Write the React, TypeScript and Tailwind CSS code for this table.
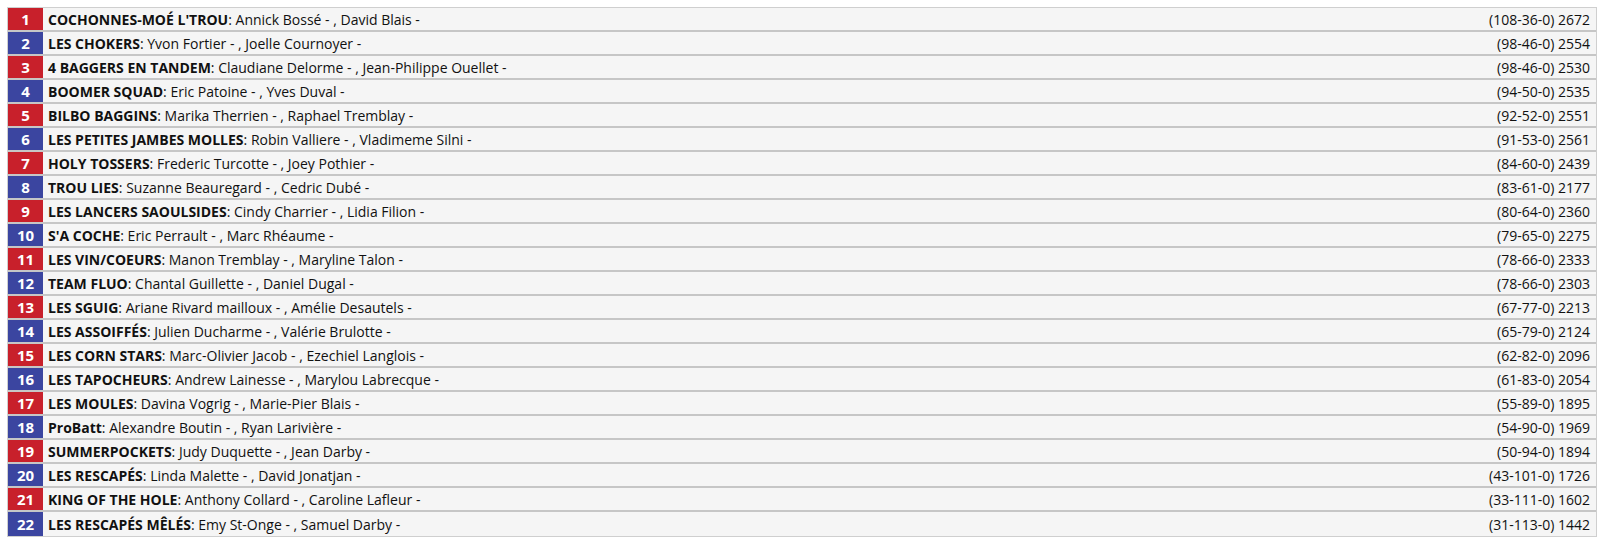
import React from 'react';

type Team = {
  name: string;
  players: string;
  record: string;
  points: number;
};

const teams: Team[] = [
  { name: "COCHONNES-MOÉ L'TROU", players: 'Annick Bossé - , David Blais -', record: '(108-36-0)', points: 2672 },
  { name: 'LES CHOKERS', players: 'Yvon Fortier - , Joelle Cournoyer -', record: '(98-46-0)', points: 2554 },
  { name: '4 BAGGERS EN TANDEM', players: 'Claudiane Delorme - , Jean-Philippe Ouellet -', record: '(98-46-0)', points: 2530 },
  { name: 'BOOMER SQUAD', players: 'Eric Patoine - , Yves Duval -', record: '(94-50-0)', points: 2535 },
  { name: 'BILBO BAGGINS', players: 'Marika Therrien - , Raphael Tremblay -', record: '(92-52-0)', points: 2551 },
  { name: 'LES PETITES JAMBES MOLLES', players: 'Robin Valliere - , Vladimeme Silni -', record: '(91-53-0)', points: 2561 },
  { name: 'HOLY TOSSERS', players: 'Frederic Turcotte - , Joey Pothier -', record: '(84-60-0)', points: 2439 },
  { name: 'TROU LIES', players: 'Suzanne Beauregard - , Cedric Dubé -', record: '(83-61-0)', points: 2177 },
  { name: 'LES LANCERS SAOULSIDES', players: 'Cindy Charrier - , Lidia Filion -', record: '(80-64-0)', points: 2360 },
  { name: "S'A COCHE", players: 'Eric Perrault - , Marc Rhéaume -', record: '(79-65-0)', points: 2275 },
  { name: 'LES VIN/COEURS', players: 'Manon Tremblay - , Maryline Talon -', record: '(78-66-0)', points: 2333 },
  { name: 'TEAM FLUO', players: 'Chantal Guillette - , Daniel Dugal -', record: '(78-66-0)', points: 2303 },
  { name: 'LES SGUIG', players: 'Ariane Rivard mailloux - , Amélie Desautels -', record: '(67-77-0)', points: 2213 },
  { name: 'LES ASSOIFFÉS', players: 'Julien Ducharme - , Valérie Brulotte -', record: '(65-79-0)', points: 2124 },
  { name: 'LES CORN STARS', players: 'Marc-Olivier Jacob - , Ezechiel Langlois -', record: '(62-82-0)', points: 2096 },
  { name: 'LES TAPOCHEURS', players: 'Andrew Lainesse - , Marylou Labrecque -', record: '(61-83-0)', points: 2054 },
  { name: 'LES MOULES', players: 'Davina Vogrig - , Marie-Pier Blais -', record: '(55-89-0)', points: 1895 },
  { name: 'ProBatt', players: 'Alexandre Boutin - , Ryan Larivière -', record: '(54-90-0)', points: 1969 },
  { name: 'SUMMERPOCKETS', players: 'Judy Duquette - , Jean Darby -', record: '(50-94-0)', points: 1894 },
  { name: 'LES RESCAPÉS', players: 'Linda Malette - , David Jonatjan -', record: '(43-101-0)', points: 1726 },
  { name: 'KING OF THE HOLE', players: 'Anthony Collard - , Caroline Lafleur -', record: '(33-111-0)', points: 1602 },
  { name: 'LES RESCAPÉS MÊLÉS', players: 'Emy St-Onge - , Samuel Darby -', record: '(31-113-0)', points: 1442 },
];

const StandingRow: React.FC<{ team: Team; rank: number }> = ({ team, rank }) => (
  <div className="flex h-[24px] border-b-2 border-[#c6c6c6] last:border-b-0">
    <div
      className={
        rank % 2 === 1
          ? 'flex w-[35px] shrink-0 items-center justify-center bg-[#c8202b] text-[15px] font-bold text-white'
          : 'flex w-[35px] shrink-0 items-center justify-center bg-[#3b45a0] text-[15px] font-bold text-white'
      }
    >
      {rank}
    </div>
    <div className="flex flex-1 items-center justify-between bg-[#f5f5f5] pl-[5px] pr-[6px] text-[14px] text-[#111]">
      <span>
        <b className="font-bold">{team.name}</b>: {team.players}
      </span>
      <span>
        {team.record} {team.points}
      </span>
    </div>
  </div>
);

export default function App() {
  return (
    <div className="bg-white pl-[7px] pr-[9px] pt-[7px]" style={{ fontFamily: '"Open Sans", sans-serif' }}>
      <div className="border border-[#cfcfcf]">
        {teams.map((t, i) => (
          <StandingRow key={t.name} team={t} rank={i + 1} />
        ))}
      </div>
    </div>
  );
}
